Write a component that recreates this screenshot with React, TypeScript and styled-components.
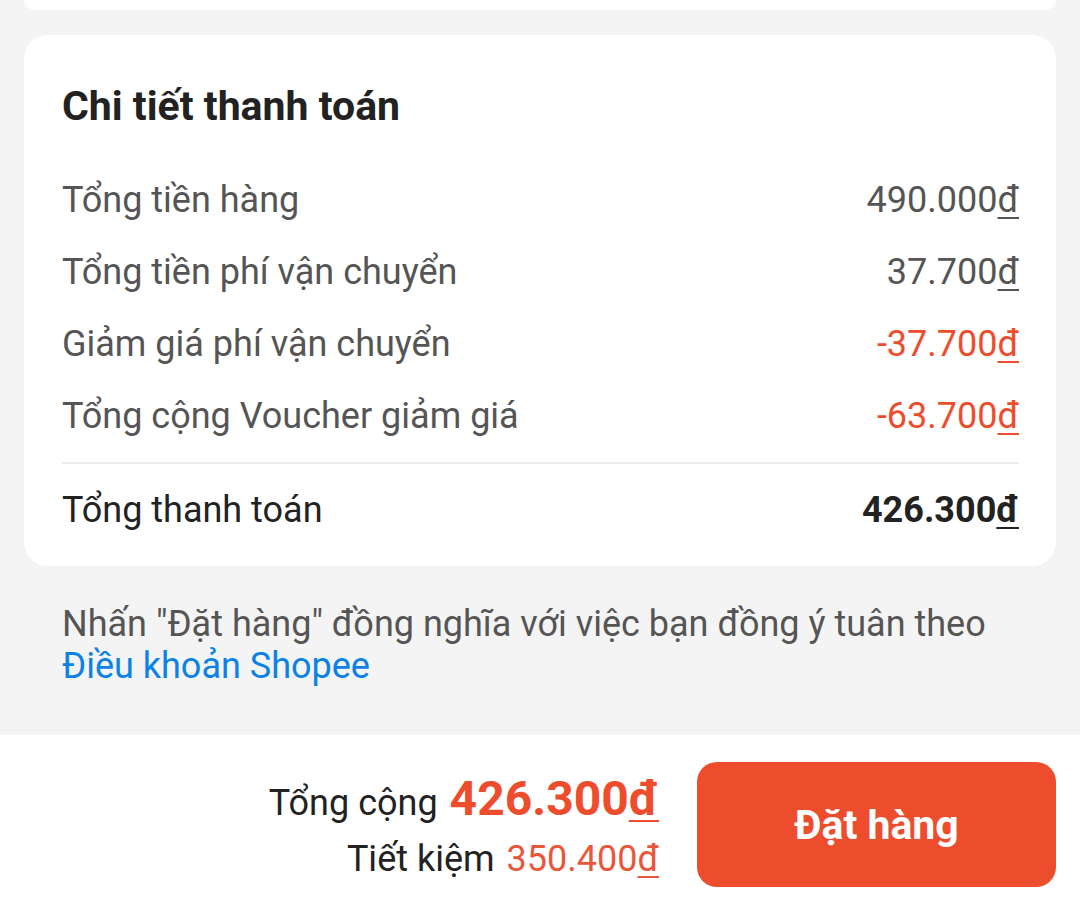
import React from "react"
import styled, { createGlobalStyle } from "styled-components"

const GlobalStyle = createGlobalStyle`
  html, body {
    margin: 0;
    padding: 0;
    background: #f4f4f4;
    font-family: Roboto, "Noto Sans", sans-serif;
  }
`

interface Line {
  label: string
  value: string
  discount?: boolean
}

const lines: Line[] = [
  { label: "Tổng tiền hàng", value: "490.000" },
  { label: "Tổng tiền phí vận chuyển", value: "37.700" },
  { label: "Giảm giá phí vận chuyển", value: "-37.700", discount: true },
  { label: "Tổng cộng Voucher giảm giá", value: "-63.700", discount: true },
]

function Money({ value }: { value: string }) {
  return (
    <>
      {value}
      <Dong>đ</Dong>
    </>
  )
}

export default function App() {
  return (
    <Page>
      <GlobalStyle />
      <PrevCard />
      <Card>
        <Title>Chi tiết thanh toán</Title>
        <Rows>
          {lines.map((l) => (
            <Row key={l.label}>
              <Label>{l.label}</Label>
              <Value $discount={l.discount}>
                <Money value={l.value} />
              </Value>
            </Row>
          ))}
        </Rows>
        <Divider />
        <TotalRow>
          <TotalLabel>Tổng thanh toán</TotalLabel>
          <TotalValue>
            <Money value="426.300" />
          </TotalValue>
        </TotalRow>
      </Card>
      <Terms>
        Nhấn "Đặt hàng" đồng nghĩa với việc bạn đồng ý tuân theo
        <br />
        <TermsLink>Điều khoản Shopee</TermsLink>
      </Terms>
      <BottomBar>
        <Summary>
          <SumLine>
            <SumLabel>Tổng cộng</SumLabel>
            <SumBig>
              <Money value="426.300" />
            </SumBig>
          </SumLine>
          <SumLine>
            <SumLabel>Tiết kiệm</SumLabel>
            <SumSaved>
              <Money value="350.400" />
            </SumSaved>
          </SumLine>
        </Summary>
        <OrderBtn>Đặt hàng</OrderBtn>
      </BottomBar>
    </Page>
  )
}

const Page = styled.div`
  width: 1080px;
  height: 914px;
  overflow: hidden;
  background: #f4f4f4;
  display: flex;
  flex-direction: column;
`
const PrevCard = styled.div`
  height: 10px;
  margin: 0 24px;
  background: #fff;
  border-radius: 0 0 22px 22px;
`
const Card = styled.div`
  margin: 25px 24px 0;
  background: #fff;
  border-radius: 24px;
  padding: 47px 37px 35px 38px;
`
const Title = styled.div`
  font-size: 41px;
  font-weight: 700;
  color: #222;
  line-height: 48px;
  margin-bottom: 49px;
`
const Rows = styled.div`
  display: flex;
  flex-direction: column;
  gap: 30px;
`
const Row = styled.div`
  display: flex;
  justify-content: space-between;
  align-items: center;
  font-size: 36px;
  line-height: 42px;
`
const Label = styled.span`
  color: #555;
`
const Value = styled.span<{ $discount?: boolean }>`
  color: ${(p) => (p.$discount ? "#ee4d2d" : "#555")};
`
const Dong = styled.span`
  text-decoration: underline;
  text-decoration-thickness: 2px;
  text-underline-offset: 5px;
`
const Divider = styled.div`
  height: 2px;
  background: #ececec;
  margin: 25px 0 25px;
`
const TotalRow = styled(Row)``
const TotalLabel = styled.span`
  color: #222;
`
const TotalValue = styled.span`
  color: #222;
  font-weight: 700;
`
const Terms = styled.div`
  padding: 37px 62px 0;
  font-size: 36px;
  line-height: 42px;
  color: #555;
  flex: 1;
`
const TermsLink = styled.span`
  color: #0a82e6;
`
const BottomBar = styled.div`
  height: 179px;
  background: #fff;
  display: flex;
  align-items: center;
  justify-content: flex-end;
  padding: 0 24px 0 0;
  gap: 38px;
`
const Summary = styled.div`
  display: flex;
  flex-direction: column;
  align-items: flex-end;
  gap: 6px;
  margin-top: 8px;
`
const SumLine = styled.div`
  display: flex;
  align-items: baseline;
  gap: 12px;
  font-size: 36px;
  line-height: 50px;
  color: #222;
`
const SumLabel = styled.span``
const SumBig = styled.span`
  font-size: 48px;
  font-weight: 700;
  color: #ee4d2d;
`
const SumSaved = styled.span`
  color: #e9573b;
`
const OrderBtn = styled.button`
  width: 359px;
  height: 125px;
  border: none;
  border-radius: 20px;
  background: #ee4d2d;
  color: #fff;
  font-family: Roboto, sans-serif;
  font-size: 41px;
  font-weight: 700;
  cursor: pointer;
`
